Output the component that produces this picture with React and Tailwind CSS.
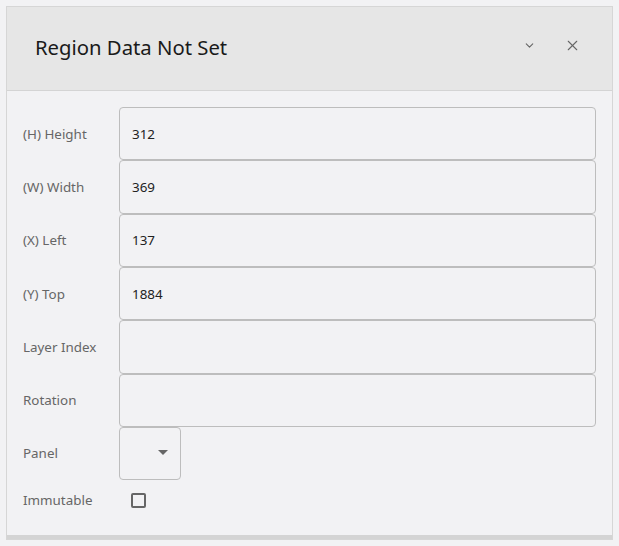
import { ChevronDown, X } from "lucide-react";

const rows = [
  { label: "(H) Height", value: "312" },
  { label: "(W) Width", value: "369" },
  { label: "(X) Left", value: "137" },
  { label: "(Y) Top", value: "1884" },
  { label: "Layer Index", value: "" },
  { label: "Rotation", value: "" },
];

export default function App() {
  return (
    <div
      className="w-[619px] h-[546px] bg-[#f2f2f4] pt-[6px] pl-[6px] overflow-hidden"
      style={{ fontFamily: '"Noto Sans", "Open Sans", sans-serif' }}
    >
      <div className="w-[607px] border border-[#d6d6d6] bg-[#f2f2f4]">
        {/* шапка */}
        <div className="h-[84px] bg-[#e6e6e6] border-b border-[#d4d4d4] flex items-center pl-[28px] pr-[31px]">
          <h1 className="flex-1 text-[20.3px] text-[#1a1a1a] leading-none pb-[2px]">Region Data Not Set</h1>
          <ChevronDown size={13} strokeWidth={2} className="text-[#666] mr-[28px] mb-[6px]" />
          <X size={17} strokeWidth={1.5} className="text-[#666] mb-[6px]" />
        </div>

        {/* поля */}
        <div className="pl-[16px] pr-[16px] pt-[16px] pb-[14px]">
          {rows.map((r) => (
            <div key={r.label} className="flex items-center h-[53.33px]">
              <label className="w-[96px] text-[13.4px] text-[#666]">{r.label}</label>
              <input
                readOnly
                value={r.value}
                className="flex-1 h-[53.33px] rounded-[4px] border border-[#bdbdbd] bg-[#f2f2f4] px-[12px] text-[13.4px] text-[#222] outline-none"
              />
            </div>
          ))}
          <div className="flex items-center h-[53px]">
            <label className="w-[96px] text-[13.4px] text-[#666]">Panel</label>
            <div className="w-[62px] h-[53px] rounded-[4px] border border-[#bdbdbd] flex items-center justify-end pr-[12px]">
              <span className="w-0 h-0 border-l-[5px] border-r-[5px] border-t-[5px] border-l-transparent border-r-transparent border-t-[#666] mb-[2px]"></span>
            </div>
          </div>
          <div className="flex items-center h-[41px]">
            <label className="w-[96px] text-[13.4px] text-[#666]">Immutable</label>
            <span className="ml-[12px] w-[15px] h-[15px] rounded-[2px] border-2 border-[#666]"></span>
          </div>
        </div>
        <div className="h-[4px] bg-[#d4d4d4]"></div>
      </div>
    </div>
  );
}
